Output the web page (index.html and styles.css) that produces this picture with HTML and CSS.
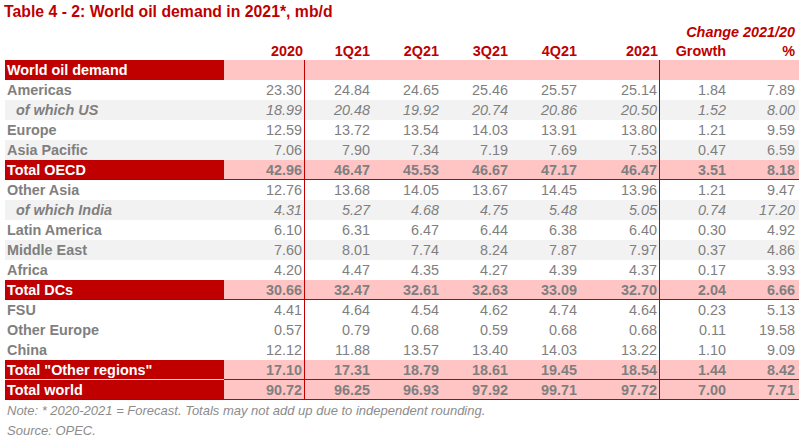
FILE: index.html
```html
<!DOCTYPE html>
<html lang="en">
<head>
<meta charset="utf-8">
<title>Table 4 - 2: World oil demand in 2021*, mb/d</title>
<link rel="stylesheet" href="styles.css">
</head>
<body>
<div class="page">
  <h1 class="title">Table 4 - 2: World oil demand in 2021*, mb/d</h1>
  <div class="table">
    <div class="row head1"><span class="change">Change 2021/20</span></div>
    <div class="row head2">
      <span class="cell"></span><span class="cell">2020</span><span class="cell">1Q21</span><span class="cell">2Q21</span><span class="cell">3Q21</span><span class="cell">4Q21</span><span class="cell">2021</span><span class="cell">Growth</span><span class="cell last">%</span>
    </div>
    <div class="row total section">
      <span class="cell label">World oil demand</span><span class="cell num sep"></span><span class="cell num"></span><span class="cell num"></span><span class="cell num"></span><span class="cell num"></span><span class="cell num sep"></span><span class="cell num"></span><span class="cell num last"></span>
    </div>
    <div class="row">
      <span class="cell label">Americas</span><span class="cell num sep">23.30</span><span class="cell num">24.84</span><span class="cell num">24.65</span><span class="cell num">25.46</span><span class="cell num">25.57</span><span class="cell num sep">25.14</span><span class="cell num">1.84</span><span class="cell num last">7.89</span>
    </div>
    <div class="row alt sub">
      <span class="cell label">of which US</span><span class="cell num sep">18.99</span><span class="cell num">20.48</span><span class="cell num">19.92</span><span class="cell num">20.74</span><span class="cell num">20.86</span><span class="cell num sep">20.50</span><span class="cell num">1.52</span><span class="cell num last">8.00</span>
    </div>
    <div class="row">
      <span class="cell label">Europe</span><span class="cell num sep">12.59</span><span class="cell num">13.72</span><span class="cell num">13.54</span><span class="cell num">14.03</span><span class="cell num">13.91</span><span class="cell num sep">13.80</span><span class="cell num">1.21</span><span class="cell num last">9.59</span>
    </div>
    <div class="row alt">
      <span class="cell label">Asia Pacific</span><span class="cell num sep">7.06</span><span class="cell num">7.90</span><span class="cell num">7.34</span><span class="cell num">7.19</span><span class="cell num">7.69</span><span class="cell num sep">7.53</span><span class="cell num">0.47</span><span class="cell num last">6.59</span>
    </div>
    <div class="row total">
      <span class="cell label">Total OECD</span><span class="cell num sep">42.96</span><span class="cell num">46.47</span><span class="cell num">45.53</span><span class="cell num">46.67</span><span class="cell num">47.17</span><span class="cell num sep">46.47</span><span class="cell num">3.51</span><span class="cell num last">8.18</span>
    </div>
    <div class="row">
      <span class="cell label">Other Asia</span><span class="cell num sep">12.76</span><span class="cell num">13.68</span><span class="cell num">14.05</span><span class="cell num">13.67</span><span class="cell num">14.45</span><span class="cell num sep">13.96</span><span class="cell num">1.21</span><span class="cell num last">9.47</span>
    </div>
    <div class="row alt sub">
      <span class="cell label">of which India</span><span class="cell num sep">4.31</span><span class="cell num">5.27</span><span class="cell num">4.68</span><span class="cell num">4.75</span><span class="cell num">5.48</span><span class="cell num sep">5.05</span><span class="cell num">0.74</span><span class="cell num last">17.20</span>
    </div>
    <div class="row">
      <span class="cell label">Latin America</span><span class="cell num sep">6.10</span><span class="cell num">6.31</span><span class="cell num">6.47</span><span class="cell num">6.44</span><span class="cell num">6.38</span><span class="cell num sep">6.40</span><span class="cell num">0.30</span><span class="cell num last">4.92</span>
    </div>
    <div class="row alt">
      <span class="cell label">Middle East</span><span class="cell num sep">7.60</span><span class="cell num">8.01</span><span class="cell num">7.74</span><span class="cell num">8.24</span><span class="cell num">7.87</span><span class="cell num sep">7.97</span><span class="cell num">0.37</span><span class="cell num last">4.86</span>
    </div>
    <div class="row">
      <span class="cell label">Africa</span><span class="cell num sep">4.20</span><span class="cell num">4.47</span><span class="cell num">4.35</span><span class="cell num">4.27</span><span class="cell num">4.39</span><span class="cell num sep">4.37</span><span class="cell num">0.17</span><span class="cell num last">3.93</span>
    </div>
    <div class="row total">
      <span class="cell label">Total DCs</span><span class="cell num sep">30.66</span><span class="cell num">32.47</span><span class="cell num">32.61</span><span class="cell num">32.63</span><span class="cell num">33.09</span><span class="cell num sep">32.70</span><span class="cell num">2.04</span><span class="cell num last">6.66</span>
    </div>
    <div class="row">
      <span class="cell label">FSU</span><span class="cell num sep">4.41</span><span class="cell num">4.64</span><span class="cell num">4.54</span><span class="cell num">4.62</span><span class="cell num">4.74</span><span class="cell num sep">4.64</span><span class="cell num">0.23</span><span class="cell num last">5.13</span>
    </div>
    <div class="row">
      <span class="cell label">Other Europe</span><span class="cell num sep">0.57</span><span class="cell num">0.79</span><span class="cell num">0.68</span><span class="cell num">0.59</span><span class="cell num">0.68</span><span class="cell num sep">0.68</span><span class="cell num">0.11</span><span class="cell num last">19.58</span>
    </div>
    <div class="row">
      <span class="cell label">China</span><span class="cell num sep">12.12</span><span class="cell num">11.88</span><span class="cell num">13.57</span><span class="cell num">13.40</span><span class="cell num">14.03</span><span class="cell num sep">13.22</span><span class="cell num">1.10</span><span class="cell num last">9.09</span>
    </div>
    <div class="row total other">
      <span class="cell label">Total "Other regions"</span><span class="cell num sep">17.10</span><span class="cell num">17.31</span><span class="cell num">18.79</span><span class="cell num">18.61</span><span class="cell num">19.45</span><span class="cell num sep">18.54</span><span class="cell num">1.44</span><span class="cell num last">8.42</span>
    </div>
    <div class="row total">
      <span class="cell label">Total world</span><span class="cell num sep">90.72</span><span class="cell num">96.25</span><span class="cell num">96.93</span><span class="cell num">97.92</span><span class="cell num">99.71</span><span class="cell num sep">97.72</span><span class="cell num">7.00</span><span class="cell num last">7.71</span>
    </div>
  </div>
  <p class="note">Note: * 2020-2021 = Forecast. Totals may not add up due to independent rounding.</p>
  <p class="note">Source: OPEC.</p>
</div>
</body>
</html>
```

FILE: styles.css
```css
* {
  box-sizing: border-box;
}

html, body {
  margin: 0;
  padding: 0;
  background: #ffffff;
}

body {
  font-family: "Liberation Sans", Arial, sans-serif;
  color: #7f7f7f;
}

.page {
  padding: 0 7px 0 5px;
}

.title {
  margin: 0;
  padding-top: 1px;
  height: 22px;
  line-height: 21px;
  font-size: 15.8px;
  font-weight: bold;
  color: #c00000;
  padding-left: 0;
  margin-left: -1px;
}

.table {
  display: flex;
  flex-direction: column;
  width: 794px;
}

.row {
  display: grid;
  grid-template-columns: 219px 81px 67px 69px 69px 69px 81px 68px 71px;
  height: 20px;
  font-size: 14.4px;
}

.cell {
  display: block;
  height: 20px;
  padding: 1px 2px 0 2px;
  line-height: 19px;
  white-space: nowrap;
  text-align: right;
}

.cell.last {
  padding-right: 4px;
}

.label {
  text-align: left;
  font-weight: bold;
}

.head1,
.head2 {
  height: 19px;
  font-weight: bold;
  color: #c00000;
}

.head2 .cell {
  height: 19px;
  line-height: 18px;
}

.change {
  grid-column: 8 / 10;
  text-align: right;
  font-style: italic;
  padding: 1px 4px 0 0;
  line-height: 18px;
  white-space: nowrap;
}

.alt {
  background: #f2f2f2;
}

.sub .label {
  font-style: italic;
  padding-left: 11px;
}

.sub .num {
  font-style: italic;
}

.sep {
  border-right: 1px solid #c00000;
}

.total .label {
  background: #c00000;
  color: #ffffff;
  border-bottom: 1px solid #b00000;
}

.total .num {
  background: #ffc5c5;
  font-weight: bold;
  border-bottom: 1px solid #c00000;
}

.section .label,
.section .num {
  border-bottom: none;
}

.other .label {
  border-bottom: 1px solid #f4dede;
}

.note {
  margin: 0;
  padding: 1px 0 0 2px;
  height: 20px;
  line-height: 19px;
  font-size: 13px;
  font-style: italic;
  color: #8c8c8c;
}
```
